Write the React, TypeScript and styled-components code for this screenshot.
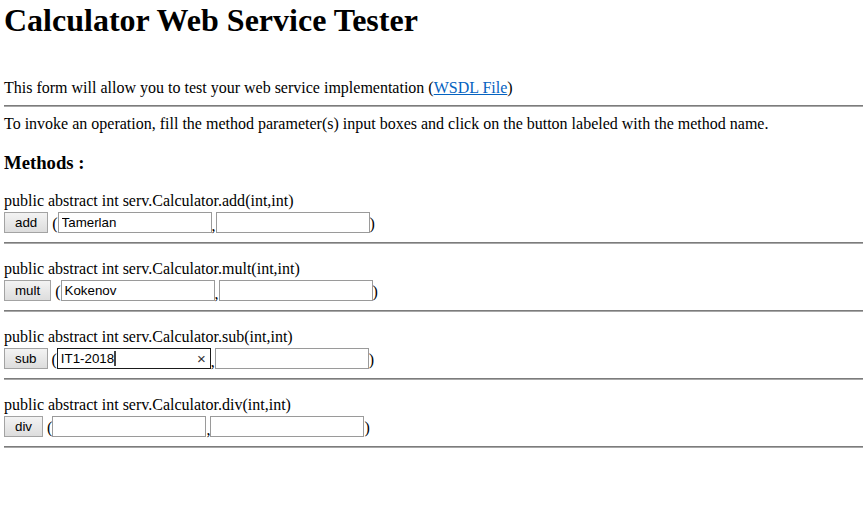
import React from "react";
import styled, { createGlobalStyle } from "styled-components";

const GlobalStyle = createGlobalStyle`
  html, body {
    margin: 0;
    padding: 0;
    background: #ffffff;
  }
  body {
    font-family: "Liberation Serif", "Times New Roman", serif;
    font-size: 16px;
    color: #000000;
  }
`;

const Page = styled.div`
  padding: 2px 0 0 4px;
  overflow: hidden;
`;

const Title = styled.h1`
  font-family: "Liberation Serif", serif;
  font-size: 32px;
  font-weight: bold;
  line-height: normal;
  margin: 0 0 40px 0;
`;

const Text = styled.div`
  line-height: normal;
`;

const Link = styled.a`
  color: #0563c1;
  text-decoration: underline;
`;

const Rule = styled.hr<{ $after?: number }>`
  height: 0;
  margin: 8px 0 ${(p) => p.$after ?? 8}px 0;
  border: none;
  border-top: 1px solid #7c7c7c;
  border-bottom: 1px solid #a8a8a8;
`;

const Heading = styled.h3`
  font-size: 18.72px;
  font-weight: bold;
  line-height: normal;
  margin: 18.72px 0;
`;

const MethodForm = styled.form`
  margin: 0;
  padding: 0;
`;

const Signature = styled.div`
  line-height: normal;
`;

const InputRow = styled.div`
  display: flex;
  align-items: center;
  height: 23px;
  margin-top: 1px;
`;

const MethodButton = styled.button`
  font-family: Arial, "Liberation Sans", sans-serif;
  font-size: 13.33px;
  color: #000;
  height: 21px;
  padding: 0 10px;
  border: 1px solid #a3a3a3;
  border-radius: 0;
  background: linear-gradient(#f3f3f3, #dddddd);
  margin: 0 4px 0 0;
  cursor: pointer;
`;

const Paren = styled.span`
  font-family: "Liberation Serif", serif;
  font-size: 16px;
  line-height: 1;
  align-self: center;
  padding-top: 2px;
`;

const Comma = styled.span`
  font-family: "Liberation Serif", serif;
  font-size: 16px;
  width: 4px;
  line-height: 1;
  padding-top: 6px;
`;

const Field = styled.span`
  position: relative;
  display: inline-flex;
`;

const ParamInput = styled.input<{ $focused?: boolean }>`
  box-sizing: border-box;
  width: 154px;
  height: 21px;
  font-family: Arial, "Liberation Sans", sans-serif;
  font-size: 13.33px;
  color: #000;
  padding: 1px 3px;
  margin: 0;
  border: 1px solid ${(p) => (p.$focused ? "#1a1a1a" : "#9a9a9a")};
  border-radius: 0;
  background: #fff;
  outline: none;
`;

const ClearGlyph = styled.span`
  position: absolute;
  right: 5px;
  top: 1px;
  font-family: Arial, "Liberation Sans", sans-serif;
  font-size: 15px;
  color: #333;
  line-height: 19px;
`;

const Caret = styled.span`
  position: absolute;
  top: 3px;
  width: 2px;
  height: 15px;
  background: #444;
`;

type Method = {
  name: string;
  first: string;
  focused?: boolean;
  caretAt?: number;
};

const methods: Method[] = [
  { name: "add", first: "Tamerlan" },
  { name: "mult", first: "Kokenov" },
  { name: "sub", first: "IT1-2018", focused: true, caretAt: 57 },
  { name: "div", first: "" },
];

export default function App() {
  return (
    <>
      <GlobalStyle />
      <Page>
        <Title>Calculator Web Service Tester</Title>
        <Text>
          This form will allow you to test your web service implementation (
          <Link href="#">WSDL File</Link>)
        </Text>
        <Rule />
        <Text>
          To invoke an operation, fill the method parameter(s) input boxes and
          click on the button labeled with the method name.
        </Text>
        <Heading>Methods :</Heading>
        {methods.map((m) => (
          <React.Fragment key={m.name}>
            <MethodForm onSubmit={(e) => e.preventDefault()}>
              <Signature>
                public abstract int serv.Calculator.{m.name}(int,int)
              </Signature>
              <InputRow>
                <MethodButton type="button">{m.name}</MethodButton>
                <Paren>(</Paren>
                <Field>
                  <ParamInput
                    type="text"
                    defaultValue={m.first}
                    $focused={m.focused}
                  />
                  {m.focused && (
                    <>
                      <Caret style={{ left: m.caretAt }} />
                      <ClearGlyph>×</ClearGlyph>
                    </>
                  )}
                </Field>
                <Comma>,</Comma>
                <Field>
                  <ParamInput type="text" defaultValue="" />
                </Field>
                <Paren>)</Paren>
              </InputRow>
            </MethodForm>
            <Rule $after={16} />
          </React.Fragment>
        ))}
      </Page>
    </>
  );
}
